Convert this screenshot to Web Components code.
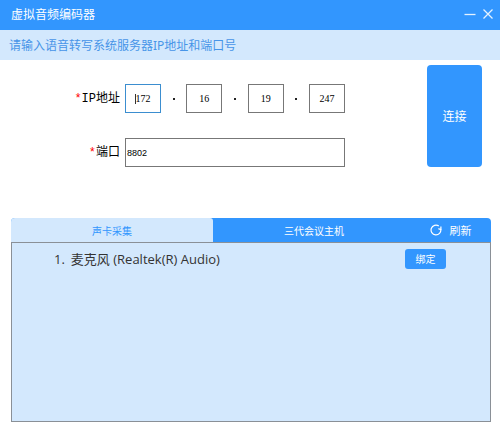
<!DOCTYPE html>
<html lang="zh-CN">
<head>
<meta charset="utf-8">
<title>虚拟音频编码器</title>
<style>
  body {
    margin: 0;
    background: #fff;
    font-family: "Noto Sans", "Noto Sans CJK SC", sans-serif;
    --blue: #3296fe;
    --pale: #d3e8fd;
    --line: #8a9097;
  }
</style>
</head>
<body>
<encoder-window></encoder-window>

<template id="title-bar">
<style>
  :host {
    display: flex;
    align-items: center;
    height: 30px;
    padding: 0 6px 0 11px;
    background: var(--blue);
    color: #fff;
  }
  h1 {
    flex: 1;
    margin: 0;
    font-size: 12px;
    font-weight: 400;
    line-height: 16px;
  }
  button {
    display: flex;
    padding: 0;
    border: 0;
    background: none;
  }
  #buttons {
    display: flex;
    gap: 6px;
  }
  svg {
    width: 12px;
    height: 12px;
    fill: none;
    stroke: #e4f2ff;
    stroke-width: 1.3;
  }
</style>
<h1><slot></slot></h1>
<div id="buttons">
  <button type="button" aria-label="最小化"><svg viewBox="0 0 12 12"><path d="M0.5 5.5H11.5"/></svg></button>
  <button type="button" aria-label="关闭"><svg viewBox="0 0 12 12"><path d="M1.5 0.5L10.5 9.5M10.5 0.5L1.5 9.5"/></svg></button>
</div>
</template>

<template id="ip-input">
<style>
  :host {
    display: flex;
    align-items: center;
    justify-content: space-between;
  }
  input {
    box-sizing: border-box;
    width: 36px;
    height: 29px;
    padding: 0;
    border: 1px solid #777;
    border-radius: 0;
    outline: none;
    background: #fff;
    color: #000;
    font: 10px "Liberation Serif", serif;
    text-align: center;
  }
  /* The part being edited, with its text cursor */
  input.active {
    border-color: #3b8ed0;
    background: linear-gradient(#333, #333) 9px center / 1px 10px no-repeat #fff;
  }
  i {
    width: 2px;
    height: 2px;
    background: #222;
  }
</style>
</template>

<template id="server-form">
<style>
  :host {
    display: block;
  }
  form {
    display: flex;
    gap: 82px;
    padding: 5px 18px 0 11px;
  }
  #fields {
    flex: 1;
    display: grid;
    grid-template-columns: 109px 1fr;
    column-gap: 5px;
    row-gap: 25px;
    align-content: end;
    align-items: center;
  }
  label {
    color: #000;
    font: 12px/16px "Liberation Mono", "Noto Sans CJK SC", monospace;
    text-align: right;
  }
  label span {
    color: #f00;
  }
  #port {
    box-sizing: border-box;
    width: 100%;
    height: 29px;
    padding: 0 1px;
    border: 1px solid #777;
    border-radius: 0;
    outline: none;
    color: #000;
    font: 9px "Liberation Sans", sans-serif;
  }
  button {
    width: 55px;
    height: 102px;
    padding: 0;
    border: 0;
    border-radius: 4px;
    background: var(--blue);
    color: #fff;
    font: inherit;
    font-size: 12px;
  }
</style>
<form>
  <div id="fields">
    <label id="ip-label"><span>*</span>IP地址</label>
    <ip-input value="172.16.19.247" role="group" aria-label="IP地址"></ip-input>
    <label for="port"><span>*</span>端口</label>
    <input id="port" type="text" value="8802">
  </div>
  <button type="button">连接</button>
</form>
</template>

<template id="device-item">
<style>
  :host {
    display: flex;
    align-items: center;
    justify-content: space-between;
    padding: 0 44px 0 42px;
    color: #333;
    font: 13px/20px "Open Sans", "Noto Sans CJK SC", sans-serif;
  }
  #name {
    display: flex;
    gap: 6px;
  }
  button {
    width: 41px;
    height: 20px;
    padding: 0;
    border: 0;
    border-radius: 3px;
    background: var(--blue);
    color: #fff;
    font: inherit;
    font-size: 10px;
    line-height: 20px;
  }
</style>
<div id="name"><span id="number"></span><slot></slot></div>
<button type="button">绑定</button>
</template>

<template id="device-panel">
<style>
  :host {
    display: flex;
    flex-direction: column;
  }
  nav {
    display: flex;
    height: 24px;
    border-radius: 4px 4px 0 0;
    background: var(--blue);
    overflow: hidden;
  }
  button {
    padding: 0;
    border: 0;
    background: none;
    color: #fff;
    font: inherit;
    font-size: 10px;
  }
  .tab {
    flex: 1;
  }
  .tab[aria-selected="true"] {
    border-top-right-radius: 3px;
    background: var(--pale);
    color: var(--blue);
  }
  #refresh {
    box-sizing: border-box;
    display: flex;
    align-items: center;
    justify-content: center;
    gap: 8px;
    width: 76px;
    padding-right: 5px;
    font-size: 11px;
  }
  svg {
    width: 12px;
    height: 12px;
    fill: none;
    stroke: #fff;
    stroke-width: 1.2;
  }
  #list {
    box-sizing: border-box;
    flex: 1;
    padding-top: 6px;
    border: 1px solid var(--line);
    background: var(--pale);
  }
</style>
<nav role="tablist">
  <button class="tab" type="button" role="tab" aria-selected="true">声卡采集</button>
  <button class="tab" type="button" role="tab" aria-selected="false">三代会议主机</button>
  <button id="refresh" type="button">
    <svg viewBox="0 0 12 12"><path d="M10.8 5.2A4.9 4.9 0 1 1 8.8 2"/><path d="M10.9 5.7V2.6M10.9 5.7L8.4 4.6"/></svg>
    刷新
  </button>
</nav>
<div id="list"><slot></slot></div>
</template>

<template id="encoder-window">
<style>
  :host {
    box-sizing: border-box;
    display: flex;
    flex-direction: column;
    min-height: 100vh;
    padding-bottom: 10px;
  }
  p {
    margin: 0;
    padding: 2px 9px 0;
    background: var(--pale);
    color: #4795e8;
    font-size: 12px;
    line-height: 28px;
  }
  device-panel {
    flex: 1;
    margin: 51px 9px 0 11px;
  }
</style>
<title-bar>虚拟音频编码器</title-bar>
<p>请输入语音转写系统服务器IP地址和端口号</p>
<server-form></server-form>
<device-panel>
  <device-item number="1">麦克风 (Realtek(R) Audio)</device-item>
</device-panel>
</template>

<script>
/**
 * Base element, clones the template with the same id as the tag name.
 */
class TemplateElement extends HTMLElement {
  constructor () {
    super()

    const template = document.getElementById(this.localName)
    this.attachShadow({ mode: 'open' })
      .appendChild(template.content.cloneNode(true))
  }
}

customElements.define('title-bar', class extends TemplateElement {})

/**
 * Four inputs, one for each part of the address.
 */
customElements.define('ip-input',
  class extends TemplateElement {
    connectedCallback () {
      this.getAttribute('value').split('.').forEach((part, i) => {
        if (i > 0) {
          this.shadowRoot.appendChild(document.createElement('i'))
        }
        const input = document.createElement('input')
        input.type = 'text'
        input.maxLength = 3
        input.value = part
        input.setAttribute('aria-label', `IP地址 ${i + 1}`)
        input.classList.toggle('active', i === 0)
        input.addEventListener('focus', () => {
          this.shadowRoot.querySelectorAll('.active').forEach(el => el.classList.remove('active'))
        })
        this.shadowRoot.appendChild(input)
      })
    }
  }
)

customElements.define('server-form',
  class extends TemplateElement {
    connectedCallback () {
      // The label belongs to four inputs, move to the first one on click
      this.shadowRoot.querySelector('#ip-label').addEventListener('click', () => {
        this.shadowRoot.querySelector('ip-input').shadowRoot.querySelector('input').focus()
      })
    }
  }
)

customElements.define('device-item',
  class extends TemplateElement {
    connectedCallback () {
      this.shadowRoot.querySelector('#number').textContent = `${this.getAttribute('number')}.`
    }
  }
)

customElements.define('device-panel',
  class extends TemplateElement {
    connectedCallback () {
      const tabs = this.shadowRoot.querySelectorAll('.tab')
      tabs.forEach(tab => tab.addEventListener('click', () => {
        tabs.forEach(other => other.setAttribute('aria-selected', other === tab))
      }))
    }
  }
)

customElements.define('encoder-window', class extends TemplateElement {})
</script>
</body>
</html>
